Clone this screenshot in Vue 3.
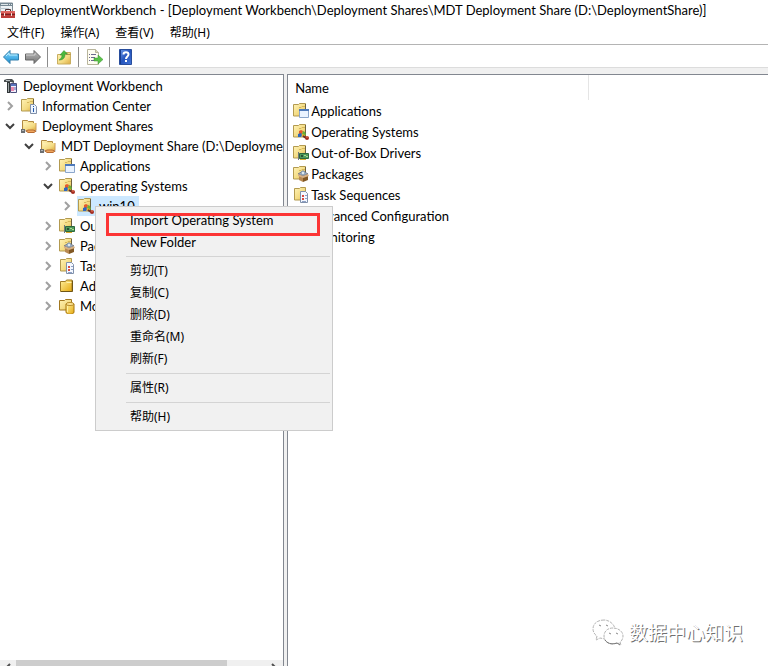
<script setup>
const menus = ['文件(F)', '操作(A)', '查看(V)', '帮助(H)']
const tools = [
  { icon: 'back', label: 'Back' },
  { icon: 'forward', label: 'Forward' },
  { icon: 'up', label: 'Up one level', divided: true },
  { icon: 'export', label: 'Export list', divided: true },
  { icon: 'help', label: 'Help', divided: true },
]
const tree = [
  { level: 0, icon: 'root', text: 'Deployment Workbench' },
  { level: 1, icon: 'info', text: 'Information Center', state: 'closed' },
  { level: 1, icon: 'share', text: 'Deployment Shares', state: 'open' },
  { level: 2, icon: 'share', text: 'MDT Deployment Share (D:\\DeploymentShare)', state: 'open' },
  { level: 3, icon: 'apps', text: 'Applications', state: 'closed' },
  { level: 3, icon: 'os', text: 'Operating Systems', state: 'open' },
  { level: 4, icon: 'os', text: 'win10', state: 'closed', selected: true },
  { level: 3, icon: 'drivers', text: 'Out-of-Box Drivers', state: 'closed' },
  { level: 3, icon: 'packages', text: 'Packages', state: 'closed' },
  { level: 3, icon: 'tasks', text: 'Task Sequences', state: 'closed' },
  { level: 3, icon: 'folder', text: 'Advanced Configuration', state: 'closed' },
  { level: 3, icon: 'monitor', text: 'Monitoring', state: 'closed' },
]
const items = tree.filter((n) => n.level === 3)
const groups = [
  ['Import Operating System', 'New Folder'],
  ['剪切(T)', '复制(C)', '删除(D)', '重命名(M)', '刷新(F)'],
  ['属性(R)'],
  ['帮助(H)'],
]
</script>

<template>
  <div class="window">
    <svg class="sprite" aria-hidden="true">
      <defs>
        <linearGradient id="gold" x1="0" y1="0" x2="1" y2="1">
          <stop offset="0" stop-color="#fff3b8" />
          <stop offset=".6" stop-color="#f3da80" />
          <stop offset="1" stop-color="#dcaa42" />
        </linearGradient>
        <linearGradient id="amber" x1="0" y1="0" x2="1" y2="1">
          <stop offset="0" stop-color="#fff0a0" />
          <stop offset="1" stop-color="#e5a80c" />
        </linearGradient>
        <linearGradient id="blue" x1="0" y1="0" x2="0" y2="1">
          <stop offset="0" stop-color="#8edcff" />
          <stop offset="1" stop-color="#168ed2" />
        </linearGradient>
        <linearGradient id="grey" x1="0" y1="0" x2="0" y2="1">
          <stop offset="0" stop-color="#bdbdbd" />
          <stop offset="1" stop-color="#747474" />
        </linearGradient>
        <linearGradient id="navy" x1="0" y1="0" x2="1" y2="1">
          <stop offset="0" stop-color="#6e9cec" />
          <stop offset=".5" stop-color="#2454bd" />
          <stop offset="1" stop-color="#4576d6" />
        </linearGradient>
        <g id="base">
          <path d="M.5 1.500h5l1-1h6v12.500H.5z" fill="url(#gold)" stroke="#b39a50" />
          <path d="M6 4.500h2l1-1h3" fill="none" stroke="#d6b75c" />
          <path d="M12.500 1v12" stroke="#6d623f" />
        </g>
      </defs>
      <symbol id="i-folder" viewBox="0 0 16 16">
        <path d="M1.500 3.500h5l1-1.500h5.500v11.500h-11.500z" fill="url(#amber)" stroke="#a07b25" />
        <path d="M2 13.500h11.500V2.500" fill="none" stroke="#705615" />
        <path d="M7.500 4.500h5" stroke="#fff2ac" />
      </symbol>
      <symbol id="i-info" viewBox="0 0 16 16">
        <use href="#base" />
        <path d="M9.500 6.500h4l2 2v7h-6z" fill="#edf5ff" stroke="#8190a9" />
        <path d="M12 8h1v1h-1zM12 10h1v4h-1z" fill="#2558ab" />
      </symbol>
      <symbol id="i-share" viewBox="0 0 16 16">
        <path d="M1.500 11V2.500h5l1 1h5V12h-11z" fill="url(#gold)" stroke="#b18a42" />
        <path d="M3 5h12v7H3z" fill="url(#gold)" />
        <path d="M15 5v7" stroke="#cf9c56" />
        <path d="M0 12.500h16v1H0z" fill="#b5b8ba" />
        <path d="M5 13l2-1h5l3 1-2 1.500H7z" fill="#efa65f" stroke="#b86c30" />
        <path d="M0 11h4v4H0z" fill="#6c6f72" />
        <path d="M1 12h2v1H1" fill="#b0b4b7" />
      </symbol>
      <symbol id="i-apps" viewBox="0 0 16 16">
        <use href="#base" />
        <path d="M6.500 6.500h9v8h-9z" fill="#eaf3ff" stroke="#8ba6cb" />
        <path d="M6 6h10v2H6z" fill="#4d79ba" />
      </symbol>
      <symbol id="i-os" viewBox="0 0 16 16">
        <use href="#base" />
        <path d="M6 7l2-1 2 1-1 3-3 1z" fill="#e65a2c" />
        <path d="M10 7l2 1 1 3-2 1-2-2z" fill="#69af38" />
        <path d="M5 10l3-1 1 2-1 2H5z" fill="#2e68bd" />
        <path d="M9 10l3 1v2l-3-1z" fill="#e9af24" />
        <path d="M10 12l3 2" stroke="#63322b" stroke-width="2" />
        <circle cx="14" cy="14" r="2" fill="#a52c20" />
        <path d="M13 13h2" stroke="#ec7855" />
      </symbol>
      <symbol id="i-drivers" viewBox="0 0 16 16">
        <use href="#base" />
        <path d="M6.500 8.500h9v5h-9z" fill="#4f9a5c" stroke="#2d683c" />
        <path d="M8 10h2v2H8z" fill="#284f35" />
        <path d="M11 10h2v1h-2zM13 11h2v1h-2z" fill="#a8d88c" />
        <path d="M7 14.500h6" stroke="#d9a92d" />
        <path d="M5.500 7v8" stroke="#72797b" />
      </symbol>
      <symbol id="i-packages" viewBox="0 0 16 16">
        <use href="#base" />
        <path d="M5 8l5-3 5 3-5 2z" fill="#aab9ca" stroke="#777b84" />
        <circle cx="10" cy="7" r="2" fill="#dce9ef" stroke="#7c91aa" />
        <path d="M6 9l4 2v5l-4-2z" fill="#b88952" />
        <path d="M10 11l5-2v5l-5 2z" fill="#815824" />
        <path d="M5 8l5 2 5-2 1 2-6 2-5-2z" fill="#d7b184" />
      </symbol>
      <symbol id="i-tasks" viewBox="0 0 16 16">
        <path d="M1.500 1.500h5l1-1h5v12.500h-11z" fill="url(#gold)" stroke="#b39a50" />
        <path d="M7.500 4.500h5l2 2v9h-7z" fill="#f4f8ff" stroke="#8192ac" />
        <path d="M9 8h2v2H9zM9 11h2v2H9z" fill="#d94b40" />
        <path d="M12 8.500h2M12 11.500h2M9 14.500h4" stroke="#8fa1c6" />
      </symbol>
      <symbol id="i-monitor" viewBox="0 0 16 16">
        <path d="M.5 2.500h5l1-1h6v10.500H.5z" fill="url(#gold)" stroke="#a27820" />
        <path d="M7 6v8c0 3 8 3 8 0V6z" fill="url(#amber)" stroke="#a7740b" />
        <path d="M8.500 7v7" stroke="#fff2a2" />
        <ellipse cx="11" cy="6" rx="4" ry="1.500" fill="#ffe798" stroke="#b68a26" />
      </symbol>
      <symbol id="i-root" viewBox="0 0 16 16">
        <path d="M2 4V2l3-1h5l2 2v2L9 4H4z" fill="#4b5052" />
        <path d="M4 2.500h4" stroke="#b9c0c1" />
        <path d="M5 4h3v11H5z" fill="#313638" />
        <path d="M6.500 5v9" stroke="#9da4a5" />
        <path d="M8.500 5.500h6v9h-6z" fill="#f2effc" stroke="#4b4f7d" />
        <path d="M9 6h5v2H9z" fill="#5873bd" />
        <path d="M9 9h3v4H9z" fill="#e88cae" />
        <path d="M12 9h2v3h-2z" fill="#a6a7d4" />
      </symbol>
      <symbol id="i-app" viewBox="0 0 16 17">
        <path d="M0 1h12.500v9H0z" fill="#edf1f4" stroke="#7e8b94" />
        <path d="M0 1h13v3H0z" fill="#758792" />
        <path d="M1 2.500h7M9 2.500h1M11 2.500h1" stroke="#dfe6ea" />
        <path d="M0 6.500h9" stroke="#bac6ce" />
        <path d="M5.500 9V7.500h5V9" fill="none" stroke="#4d3130" />
        <path d="M1 9h14v7H1z" fill="#bd3e3b" />
        <path d="M1 9h14v2H1z" fill="#dd6661" />
        <path d="M1 12.500h14" stroke="#792323" />
        <path d="M4 11h1v3H4zM11 11h1v3h-1z" fill="#f1dfdc" />
      </symbol>
      <symbol id="i-back" viewBox="0 0 16 16">
        <path d="M.5 8L7 1.500V5h8.500v6H7v3.500z" fill="url(#blue)" stroke="#327eab" />
        <path d="M3 7l3-3v2h8" fill="none" stroke="#b8edff" />
      </symbol>
      <symbol id="i-forward" viewBox="0 0 16 16">
        <path d="M15.500 8L9 1.500V5H.5v6H9v3.500z" fill="url(#grey)" stroke="#666" />
        <path d="M1 6h9V4" fill="none" stroke="#d2d2d2" />
      </symbol>
      <symbol id="i-up" viewBox="0 0 16 16">
        <path d="M1.500 5.500h6l1-2h6v11.500h-13z" fill="url(#gold)" stroke="#c9ae60" />
        <path d="M9.500 5.500h5" stroke="#b29345" />
        <path d="M3 11c2-1 3-3 3-5H4l4-4.500L11.500 5H9c0 4-2 6-6 6z" fill="#4bb83d" stroke="#2f8a2a" stroke-width=".5" />
      </symbol>
      <symbol id="i-export" viewBox="0 0 16 16">
        <path d="M.5.5h8l3 3v12H.5z" fill="#fffdf2" stroke="#b8b59c" />
        <path d="M8.500.5v3h3" fill="#ded9bb" stroke="#b8b59c" />
        <path d="M2 5.500h1M4 5.500h5M2 8.500h1M4 8.500h4M2 11.500h1M4 11.500h4" stroke="#6d6b8f" />
        <path d="M7 9h4V6l5 4.500-5 4.500v-3H7z" fill="#5bc34a" stroke="#38902e" stroke-width=".5" />
      </symbol>
      <symbol id="i-help" viewBox="0 0 16 16">
        <path d="M1.500.5h12v15h-12z" fill="url(#navy)" stroke="#284d9c" />
        <path d="M2.500 1v14" stroke="#173c8f" />
        <path d="M5.500 5.500c0-3 5-3 5 0 0 2-2.500 2-2.500 4.500" fill="none" stroke="#fff" stroke-width="2" />
        <path d="M7 11h2v2H7z" fill="#fff" />
      </symbol>
    </svg>

    <header class="titlebar">
      <svg class="app-icon"><use href="#i-app" /></svg>
      <h1>DeploymentWorkbench - [Deployment Workbench\Deployment Shares\MDT Deployment Share (D:\DeploymentShare)]</h1>
    </header>
    <nav class="menubar">
      <button v-for="m in menus" :key="m" type="button">{{ m }}</button>
    </nav>
    <div class="toolbar">
      <button v-for="t in tools" :key="t.icon" type="button" :class="{ divided: t.divided }" :aria-label="t.label">
        <svg class="icon"><use :href="'#i-' + t.icon" /></svg>
      </button>
    </div>

    <main class="panes">
      <section class="tree-pane">
        <ul class="tree">
          <li v-for="n in tree" :key="n.text" class="node" :class="'level-' + n.level">
            <button v-if="n.state" class="toggle" :class="n.state" type="button" :aria-label="'Toggle ' + n.text">
              <svg viewBox="0 0 10 10"><path d="M3 1l4 4-4 4" /></svg>
            </button>
            <button class="label" :class="{ selected: n.selected }" type="button">
              <svg class="icon"><use :href="'#i-' + n.icon" /></svg>
              <span>{{ n.text }}</span>
            </button>
          </li>
        </ul>
        <div class="scrollbar">
          <svg viewBox="0 0 16 6"><path d="M10 4L7 7" /></svg>
          <span class="thumb"></span>
          <span class="track"></span>
          <svg viewBox="0 0 16 6"><path d="M5 4l3 3" /></svg>
        </div>
      </section>

      <section class="list-pane">
        <table>
          <thead>
            <tr><th><span>Name</span></th><th></th></tr>
          </thead>
          <tbody>
            <tr v-for="n in items" :key="n.text">
              <td colspan="2">
                <div class="cell"><svg class="icon"><use :href="'#i-' + n.icon" /></svg><span>{{ n.text }}</span></div>
              </td>
            </tr>
          </tbody>
        </table>
      </section>
    </main>

    <div class="context-menu">
      <div v-for="g in groups" :key="g[0]" class="group">
        <button v-for="entry in g" :key="entry" type="button">{{ entry }}</button>
      </div>
      <div class="marker"></div>
    </div>

    <div class="watermark">
      <svg viewBox="0 0 32 28">
        <g fill="#fff" stroke="#b4b4b4" stroke-dasharray="3 1">
          <path d="M12 2C5 2 1 6 1 11c0 3 2 6 4 7l-1 4 4-2 5 1c7 0 10-4 10-9S18 2 12 2z" />
          <path d="M21 10c-6 0-9 4-9 8s3 8 9 8l5-1 3 2-1-3c2-1 3-4 3-6 0-4-4-8-10-8z" />
        </g>
        <path d="M7 7l2 1M14 7l2 1M17 15l2 1M24 15l2 1" stroke="#888" />
        <path d="M13 22c2 3 6 5 12 3l3 2" fill="none" stroke="#777" />
      </svg>
      <span>数据中心知识</span>
    </div>
  </div>
</template>

<style>
body {
  margin: 0;
}
</style>

<style scoped>
.window {
  position: relative;
  display: flex;
  flex-direction: column;
  height: 100vh;
  overflow: hidden;
  background: #fff;
  color: #000;
  font: 13px/20px Lato, "Noto Sans CJK SC", sans-serif;
}
.sprite {
  position: absolute;
  width: 0;
  height: 0;
}
button {
  margin: 0;
  padding: 0;
  border: 0;
  background: none;
  color: inherit;
  font: inherit;
  text-align: left;
  white-space: nowrap;
}
.icon {
  flex: none;
  display: block;
  width: 16px;
  height: 16px;
}
.titlebar {
  display: flex;
  align-items: center;
  gap: 4px;
  height: 20px;
}
.app-icon {
  width: 16px;
  height: 17px;
}
h1 {
  margin: 0;
  font-size: 13px;
  font-weight: 400;
  line-height: 18px;
  white-space: nowrap;
}
.menubar {
  display: flex;
  gap: 16px;
  height: 24px;
  padding-left: 7px;
  border-bottom: 1px solid #b4b4b4;
  font: 12px/26px "Noto Sans", "Noto Sans CJK SC", sans-serif;
}
.toolbar {
  display: flex;
  align-items: center;
  box-sizing: border-box;
  gap: 6px;
  height: 23px;
  padding: 2px 3px 0;
  border-bottom: 1px solid #dcdcdc;
}
.toolbar .divided {
  padding: 2px 0 2px 8px;
  border-left: 1px solid #8c8c8c;
}
.panes {
  display: flex;
  flex: 1;
  min-height: 0;
  gap: 3px;
  padding-top: 6px;
  background: #f0f0f0;
}
.tree-pane {
  display: flex;
  flex-direction: column;
  flex: 0 0 37%;
  box-sizing: border-box;
  min-width: 0;
  border-top: 1px solid #828790;
  border-right: 1px solid #828790;
  background: #fff;
}
.tree {
  flex: 1;
  min-height: 0;
  margin: 0;
  padding: 1px 0 0;
  overflow: hidden;
  list-style: none;
}
.node {
  display: flex;
  height: 20px;
}
.level-0 { padding-left: 1px; }
.level-2 { padding-left: 19px; }
.level-3 { padding-left: 38px; }
.level-4 { padding-left: 57px; }
.toggle {
  display: flex;
  flex: none;
  align-items: center;
  justify-content: center;
  width: 20px;
}
.toggle svg {
  width: 10px;
  height: 10px;
  fill: none;
  stroke: #a0a0a0;
  stroke-width: 2;
}
.toggle.open svg {
  stroke: #404040;
  transform: rotate(90deg);
}
.label {
  display: flex;
  align-items: center;
  gap: 5px;
  padding: 0 4px 0 1px;
}
.label.selected {
  background: #cce8ff;
}
.scrollbar {
  display: flex;
  flex: none;
  height: 6px;
  background: #f0f0f0;
}
.scrollbar svg {
  flex: none;
  width: 16px;
  height: 6px;
  fill: none;
  stroke: #505050;
  stroke-width: 2;
}
.thumb {
  flex: 84;
  background: #cdcdcd;
}
.track {
  flex: 16;
}
.list-pane {
  flex: 1;
  min-width: 0;
  overflow: hidden;
  border-top: 1px solid #828790;
  border-left: 1px solid #828790;
  background: #fff;
}
table {
  width: 100%;
  table-layout: fixed;
  border-collapse: collapse;
}
th {
  height: 25px;
  padding: 0 0 0 7px;
  font-weight: 400;
  text-align: left;
}
th:first-child {
  width: 293px;
  border-right: 1px solid #e5e5e5;
}
td {
  height: 21px;
  padding: 0;
}
.cell {
  display: flex;
  align-items: center;
  gap: 2px;
  padding-left: 5px;
}
.context-menu {
  position: absolute;
  top: 206px;
  left: 95px;
  box-sizing: border-box;
  width: 238px;
  padding: 2px;
  border: 1px solid #ccc;
  background: #f1f1f1;
}
.group button {
  display: block;
  width: 100%;
  height: 22px;
  padding-left: 32px;
  line-height: 22px;
}
.group:not(:first-child) button {
  font-family: "Noto Sans", "Noto Sans CJK SC", sans-serif;
  font-size: 12px;
}
.group + .group::before {
  content: "";
  display: block;
  height: 1px;
  margin: 3px 0 3px 28px;
  background: #d4d4d4;
}
.marker {
  position: absolute;
  top: 6px;
  left: 10px;
  box-sizing: border-box;
  width: 214px;
  height: 23px;
  border: 3px solid #fc3535;
}
.watermark {
  position: absolute;
  right: 25px;
  bottom: 20px;
  display: flex;
  align-items: center;
  gap: 5px;
  color: #fff;
  font: 19px/28px "Noto Sans CJK SC", sans-serif;
  text-shadow: 1px 1px 0 #707070;
}
.watermark svg {
  width: 32px;
  height: 28px;
}
</style>
